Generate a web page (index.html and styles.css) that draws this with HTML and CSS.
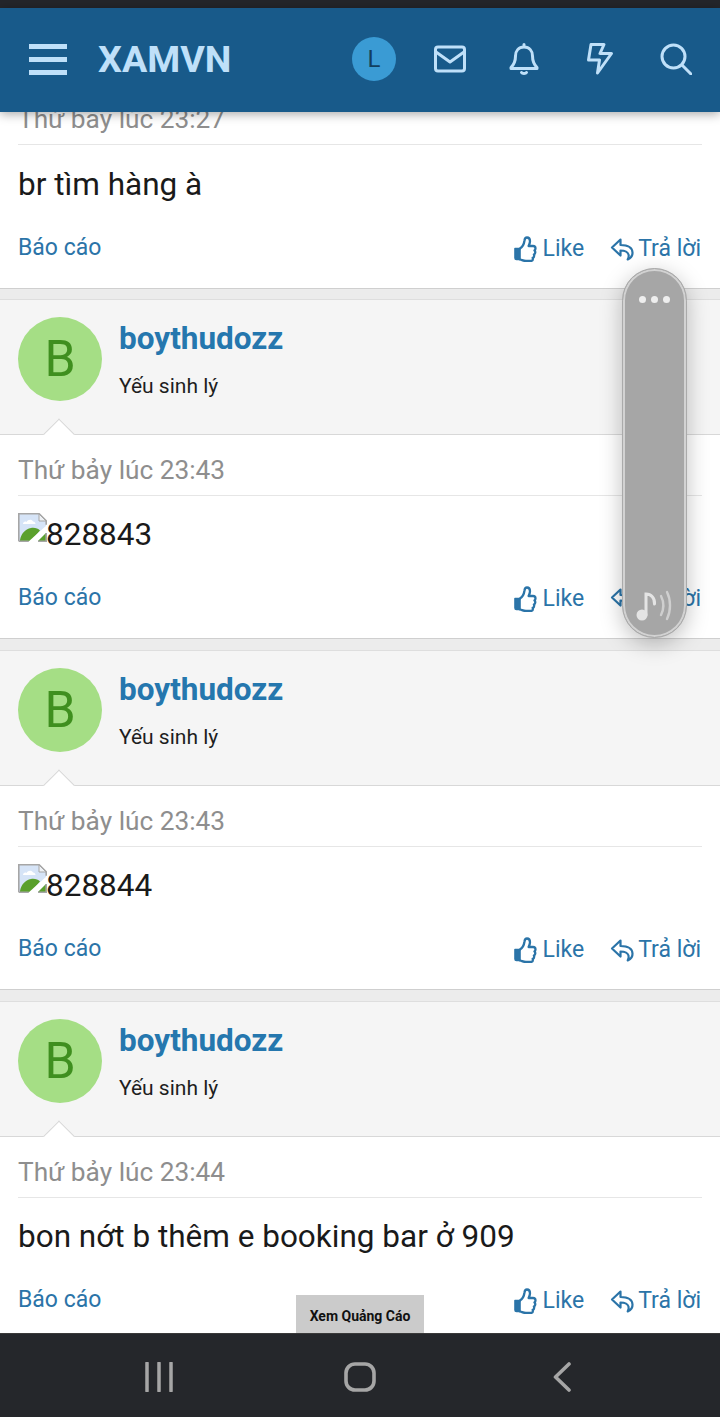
FILE: index.html
```html
<!DOCTYPE html>
<html>
<head>
  <title>XAMVN</title>
  <link rel="stylesheet" href="styles.css">
</head>
<body>
  <svg class="sprites" width="0" height="0">
    <symbol id="thumb" viewBox="0 0 24 26">
      <path d="M2 12.500h5v11H3.500A1.500 1.500 0 0 1 2 22z" fill="currentColor" stroke="currentColor" stroke-width="1.600" stroke-linejoin="round"/>
      <path d="M7 12.500c2.500-1.500 4-4.500 4.500-8 .2-1.800 1.300-3 2.500-3 1.900 0 3 1.700 3 3.800 0 1.800-.7 3.300-1.400 4.700h4.400c1.500 0 2.500 1.100 2.500 2.400 0 .9-.4 1.500-1 2 .5.500.8 1.100.8 1.900 0 1-.6 1.800-1.400 2.200.2.400.3.800.3 1.300 0 1-.6 1.800-1.500 2.100.1.300.2.600.2 1 0 1.300-1.100 2.100-2.400 2.100h-4.500c-2.500 0-3.500-.8-6-1.500" fill="none" stroke="currentColor" stroke-width="2.300" stroke-linejoin="round" stroke-linecap="round"/>
    </symbol>
    <symbol id="reply" viewBox="0 0 24 24">
      <path d="M10.500 2.500 2 10.500l8.500 8v-5c4 0 7 1 8 4 .5 1.500.2 3-.8 5 3.300-1.500 5-4 4.800-7-.3-5-5-7.500-12-7.500z" fill="none" stroke="currentColor" stroke-width="2.200" stroke-linejoin="round"/>
    </symbol>
    <symbol id="broken" viewBox="0 0 29 29">
      <path d="M1 1h20l7 7v20H1z" fill="#d6e4f7"/>
      <path d="M5 11c0-2 2-3 3.500-2C10 6 14 6 15 8.500c1.500 0 2.500 1 2.500 2.500z" fill="#fff"/>
      <path d="M2 27c1-6 5-11 11-12 4-.5 7 .5 9 2.500L13 28H2z" fill="#5aa02c"/>
      <path d="M10 29 29 12v7L19 29z" fill="#fff"/>
      <path d="M28 20v8h-8z" fill="#5aa02c"/>
      <path d="M.8 28.200V.8h20.400l7 7v4M28.200 20v8.200H20M.8 28.200h10" fill="none" stroke="#a6a6a6" stroke-width="1.600"/>
      <path d="M21 1v7h7z" fill="#eef1f5" stroke="#a6a6a6"/>
    </symbol>
  </svg>

  <div class="status-bar"></div>

  <header class="top-bar">
    <div class="burger"><span></span><span></span><span></span></div>
    <div class="logo">XAMVN</div>
    <div class="top-icons">
      <div class="me">L</div>
      <svg class="top-icon ic-mail" viewBox="0 0 32 32"><rect x="1.500" y="4" width="29" height="24" rx="2.500"/><path d="M2 9l14 10 14-10"/></svg>
      <svg class="top-icon ic-bell" viewBox="0 0 32 32"><path d="M16 1.500v2.500M16 4c-5.500 0-8.500 4-8.500 9 0 6-1.500 8.500-4.500 11.500v1h26v-1c-3-3-4.500-5.500-4.500-11.500 0-5-3-9-8.500-9z"/><path d="M13.500 29.500c.8 1.300 4.200 1.300 5 0"/></svg>
      <svg class="top-icon" viewBox="0 0 32 32"><path d="M7 1.500H20L16 10.500H27.500L13.500 30L15.500 17H4.500Z"/></svg>
      <svg class="top-icon" viewBox="0 0 32 32"><circle cx="13.500" cy="13.500" r="11.500"/><path d="M22 22l9 9"/></svg>
    </div>
  </header>

  <main class="thread">
    <article class="post first">
      <div class="post-main">
        <div class="post-date">Thứ bảy lúc 23:27</div>
        <div class="post-text">br tìm hàng à</div>
        <div class="post-actions">
          <a class="report">Báo cáo</a>
          <a class="act like"><svg class="ic-like"><use href="#thumb"/></svg>Like</a>
          <a class="act"><svg class="ic-reply"><use href="#reply"/></svg>Trả lời</a>
        </div>
      </div>
    </article>

    <article class="post">
      <div class="post-user">
        <div class="avatar">B</div>
        <div>
          <div class="username">boythudozz</div>
          <div class="usertitle">Yếu sinh lý</div>
        </div>
      </div>
      <div class="post-main">
        <div class="post-date">Thứ bảy lúc 23:43</div>
        <div class="post-text"><svg class="broken"><use href="#broken"/></svg>828843</div>
        <div class="post-actions">
          <a class="report">Báo cáo</a>
          <a class="act like"><svg class="ic-like"><use href="#thumb"/></svg>Like</a>
          <a class="act"><svg class="ic-reply"><use href="#reply"/></svg>Trả lời</a>
        </div>
      </div>
    </article>

    <article class="post">
      <div class="post-user">
        <div class="avatar">B</div>
        <div>
          <div class="username">boythudozz</div>
          <div class="usertitle">Yếu sinh lý</div>
        </div>
      </div>
      <div class="post-main">
        <div class="post-date">Thứ bảy lúc 23:43</div>
        <div class="post-text"><svg class="broken"><use href="#broken"/></svg>828844</div>
        <div class="post-actions">
          <a class="report">Báo cáo</a>
          <a class="act like"><svg class="ic-like"><use href="#thumb"/></svg>Like</a>
          <a class="act"><svg class="ic-reply"><use href="#reply"/></svg>Trả lời</a>
        </div>
      </div>
    </article>

    <article class="post">
      <div class="post-user">
        <div class="avatar">B</div>
        <div>
          <div class="username">boythudozz</div>
          <div class="usertitle">Yếu sinh lý</div>
        </div>
      </div>
      <div class="post-main">
        <div class="post-date">Thứ bảy lúc 23:44</div>
        <div class="post-text">bon nớt b thêm e booking bar ở 909</div>
        <div class="post-actions">
          <a class="report">Báo cáo</a>
          <a class="act like"><svg class="ic-like"><use href="#thumb"/></svg>Like</a>
          <a class="act"><svg class="ic-reply"><use href="#reply"/></svg>Trả lời</a>
        </div>
      </div>
    </article>

    <div class="ad-tag">Xem Quảng Cáo</div>

    <div class="float-pill">
      <div class="pill-dots"><span></span><span></span><span></span></div>
      <svg class="pill-note" viewBox="0 0 40 32">
        <circle cx="7" cy="25" r="5.500" fill="#e4e4e4"/>
        <path d="M11 25V4c5 0 9 4 8.500 10" fill="none" stroke="#e4e4e4" stroke-width="3" stroke-linecap="round"/>
        <path d="M26 6c3 6 3 13 0 19M32 2c4 8 4 19 0 27" fill="none" stroke="#cfcfcf" stroke-width="2.400" stroke-linecap="round"/>
      </svg>
    </div>
  </main>

  <nav class="nav-bar">
    <svg class="nav-recent" viewBox="0 0 30 30"><path d="M3 1v28M15 1v28M27 1v28"/></svg>
    <svg class="nav-home" viewBox="0 0 32 30"><rect x="2" y="2" width="28" height="26" rx="9"/></svg>
    <svg class="nav-back" viewBox="0 0 18 30"><path d="M16 2 2.500 15 16 28"/></svg>
  </nav>
</body>
</html>
```

FILE: styles.css
```css
* {
  box-sizing: border-box;
}

html, body {
  margin: 0;
  height: 1417px;
  overflow: hidden;
}

body {
  display: flex;
  flex-direction: column;
  font-family: Roboto, "Liberation Sans", sans-serif;
  background-color: #fff;
}

.sprites {
  display: none;
}

.status-bar {
  height: 8px;
  background-color: #24262b;
}

.top-bar {
  position: relative;
  z-index: 5;
  height: 104px;
  display: flex;
  align-items: center;
  padding: 0 28px 2px 29px;
  background-color: #185a8a;
  box-shadow: 0 2px 10px rgba(0, 0, 0, 0.35);
  color: #bfe0f9;
}

.burger {
  width: 38px;
  height: 31px;
  display: flex;
  flex-direction: column;
  justify-content: space-between;
}

.burger span {
  height: 5px;
  background-color: #bfe0f9;
}

.logo {
  margin-left: 31px;
  font-size: 37.700px;
  font-weight: 700;
  line-height: 40px;
}

.top-icons {
  margin-left: auto;
  display: flex;
  align-items: center;
}

.me {
  width: 44px;
  height: 44px;
  border-radius: 50%;
  background-color: #3a9bd4;
  color: #123f5f;
  font-size: 24px;
  line-height: 44px;
  text-align: center;
}

.top-icon {
  width: 32px;
  height: 32px;
  margin-left: 44px;
  fill: none;
  stroke: #bfe0f9;
  stroke-width: 3;
  stroke-linecap: round;
  stroke-linejoin: round;
}

.top-icon.ic-mail {
  margin-left: 38px;
}

.top-icon.ic-bell {
  margin-left: 42px;
}

.thread {
  position: relative;
  height: 1221px;
  overflow: hidden;
  background-color: #ececec;
}

.post {
  border-bottom: 1px solid #cfcfcf;
  margin-bottom: 11px;
}

.post.first {
  margin-top: -28px;
  margin-bottom: 10px;
}

.post.first .post-text {
  height: 69px;
  padding-top: 20px;
}

.post-user {
  display: flex;
  align-items: flex-start;
  gap: 17px;
  height: 136px;
  padding: 17px 18px 0;
  background-color: #f5f5f5;
  border-top: 1px solid #dedede;
  border-bottom: 1px solid #d8d8d8;
  position: relative;
}

/* little notch above the post body */
.post-user::after {
  content: "";
  position: absolute;
  left: 48px;
  bottom: -11px;
  width: 21px;
  height: 21px;
  background-color: #fff;
  border-top: 1px solid #d8d8d8;
  border-left: 1px solid #d8d8d8;
  transform: rotate(45deg);
}

.post-user + .post-main {
  position: relative;
}

.avatar {
  width: 84px;
  height: 84px;
  border-radius: 50%;
  background-color: #a5de85;
  color: #3f8f1f;
  font-size: 50px;
  line-height: 84px;
  text-align: center;
}

.username {
  margin-top: 4px;
  font-size: 31.500px;
  font-weight: 700;
  line-height: 36px;
  color: #2577ae;
}

.usertitle {
  margin-top: 16px;
  font-size: 21px;
  line-height: 26px;
  color: #1e1e1e;
}

.post-main {
  padding: 0 18px;
  background-color: #fff;
}

.post-date {
  height: 61px;
  padding-top: 19px;
  font-size: 26.250px;
  line-height: 32px;
  color: #8e8e8e;
  border-bottom: 1px solid #e6e6e6;
}

.post-text {
  display: flex;
  align-items: flex-start;
  height: 68px;
  padding-top: 19px;
  font-size: 31.500px;
  line-height: 40px;
  color: #1a1a1a;
}

.broken {
  width: 29px;
  height: 29px;
  margin-top: -2px;
  margin-right: -1px;
}

.post-actions {
  height: 74px;
  display: flex;
  align-items: flex-start;
  padding-top: 20px;
  font-size: 23px;
  line-height: 30px;
  color: #2b74a8;
}

.report {
  margin-top: -1px;
  margin-right: auto;
}

.act {
  display: flex;
  align-items: center;
  margin-right: 1px;
  margin-left: 26px;
}

.act.like {
  margin-right: 0;
}

.ic-like {
  width: 24px;
  height: 26px;
  margin-right: 6px;
}

.ic-reply {
  width: 24px;
  height: 24px;
  margin-right: 4px;
}

.ad-tag {
  position: absolute;
  left: 296px;
  bottom: 0;
  width: 128px;
  height: 38px;
  padding-top: 11px;
  background-color: #cbcbcb;
  color: #111;
  font-size: 14px;
  font-weight: 700;
  line-height: 20px;
  text-align: center;
}

.float-pill {
  position: absolute;
  left: 622px;
  top: 156px;
  width: 65px;
  height: 370px;
  border-radius: 33px;
  background-color: #a6a6a6;
  border: 1px solid #aaaaaa;
  box-shadow: inset 0 0 0 2px #d2d2d2, 0 6px 22px rgba(0, 0, 0, 0.25);
}

.pill-dots {
  display: flex;
  justify-content: center;
  gap: 5px;
  margin-top: 27px;
}

.pill-dots span {
  width: 7px;
  height: 7px;
  border-radius: 50%;
  background-color: #eeeeee;
}

.pill-note {
  position: absolute;
  left: 12px;
  bottom: 15px;
  width: 40px;
  height: 32px;
}

.nav-bar {
  flex: 1;
  position: relative;
  z-index: 5;
  background-color: #25272b;
  border-top: 1px solid #3a3a3a;
  display: flex;
  align-items: center;
  padding-top: 3px;
}

.nav-bar svg {
  fill: none;
  stroke: #a6a6a6;
  stroke-linecap: round;
  stroke-linejoin: round;
}

.nav-recent {
  width: 30px;
  height: 30px;
  margin-left: 144px;
  stroke-width: 3.500;
}

.nav-home {
  width: 32px;
  height: 30px;
  margin-left: 170px;
  stroke-width: 3.600;
}

.nav-back {
  width: 18px;
  height: 30px;
  margin-left: 177px;
  stroke-width: 3.600;
}
```
